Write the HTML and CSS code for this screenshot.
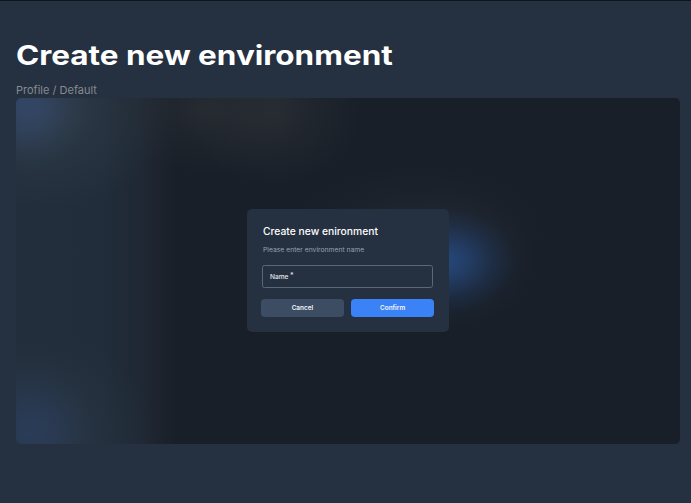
FILE: index.html
```html
<!DOCTYPE html>
<html lang="en">
<head>
<meta charset="utf-8">
<title>Create new environment</title>
<link rel="stylesheet" href="styles.css">
</head>
<body>
<main class="page">
  <h1 class="heading"><span class="heading-text">Create new environment</span></h1>
  <p class="crumb">Profile / Default</p>
  <section class="stage">
    <form class="dialog">
      <h2 class="title"><span class="title-text">Create new enironment</span></h2>
      <p class="hint"><span class="hint-text">Please enter environment name</span></p>
      <div class="field"><span class="field-label">Name</span><span class="star">*</span></div>
      <div class="actions">
        <button type="button" class="btn">Cancel</button>
        <button type="button" class="btn primary">Confirm</button>
      </div>
    </form>
  </section>
</main>
</body>
</html>
```
FILE: styles.css
```css
* { box-sizing: border-box; margin: 0; }
body { background: #253040; color: #fff; font-family: Inter, "Liberation Sans", sans-serif; overflow: hidden; }
.page { height: 503px; padding: 38px 11.5px 0 16px; border-top: 1px solid #10151c; }
.heading { height: 35px; font-size: 26.5px; line-height: 32px; font-weight: 700; white-space: nowrap; }
.heading-text, .title-text, .hint-text { display: inline-block; transform-origin: 0 50%; }
.heading-text { transform: scaleX(1.187); }
.crumb { height: 24px; padding-top: 8px; font-size: 11px; line-height: 17px; color: #858b93; white-space: nowrap; }
.stage {
  height: 345.5px;
  padding: 111px 0 0 230.5px;
  border-radius: 5px;
  background:
    radial-gradient(ellipse 62px 66px at 10px 8px, rgba(54, 77, 122, .6), rgba(54, 77, 122, .42) 30%, rgba(54, 77, 122, .12) 70%, transparent),
    radial-gradient(ellipse 130px 100px at 25px 12px, rgba(58, 73, 85, .6), rgba(52, 66, 78, .3) 50%, transparent),
    radial-gradient(ellipse 72px 76px at 14px 332px, rgba(43, 64, 102, .6), rgba(43, 64, 102, .38) 35%, rgba(43, 64, 102, .1) 75%, transparent),
    radial-gradient(ellipse 115px 100px at 24px 336px, rgba(48, 61, 77, .6), rgba(45, 58, 72, .3) 50%, transparent),
    radial-gradient(ellipse 90px 68px at 430px 163px, #26477c, rgba(36, 65, 110, .85) 25%, rgba(33, 57, 94, .5) 52%, rgba(29, 45, 65, .2) 76%, transparent),
    radial-gradient(ellipse 125px 68px at 402px 135px, rgba(38, 42, 51, .7), rgba(34, 39, 48, .35) 60%, transparent),
    radial-gradient(ellipse 88px 76px at 258px 12px, rgba(46, 50, 56, .65), rgba(41, 46, 53, .35) 55%, transparent),
    radial-gradient(ellipse 105px 66px at 190px 10px, rgba(43, 48, 54, .7), rgba(38, 43, 50, .35) 55%, transparent),
    linear-gradient(90deg, #222e3b 0, #212d3a 85px, #1f2935 120px, #1e2530 137px, #191f28 160px, #191f28 100%);
}
.dialog { width: 202.5px; height: 123px; padding: 15px 14.5px 0 14.5px; border-radius: 5px; background: #253040; }
.title { height: 18px; padding-left: 2px; font-size: 10.2px; line-height: 15px; font-weight: 500; white-space: nowrap; }
.title-text { transform: scaleX(1.012); }
.hint { height: 23px; padding: 2px 0 0 2px; font-size: 6.4px; line-height: 12px; color: #98a1b0; white-space: nowrap; }
.hint-text { transform: scaleX(1.06); }
.field { display: flex; width: 171px; height: 23px; margin-left: 1px; padding-left: 7px; border: 1px solid #5b687a; border-radius: 2.5px; font-size: 6.6px; line-height: 22px; font-weight: 500; color: #e3e6ea; }
.star { padding-left: 1.5px; font-size: 7px; line-height: 20px; }
.actions { display: flex; gap: 7.5px; margin: 10.5px .5px 0 0; }
.btn { flex: 1; height: 18.5px; padding: 0; border: 0; border-radius: 4px; background: #3c4d63; color: #f4f6f8; font: 600 6.4px/18.5px Inter, "Liberation Sans", sans-serif; }
.primary { background: #3b82f6; }
```
